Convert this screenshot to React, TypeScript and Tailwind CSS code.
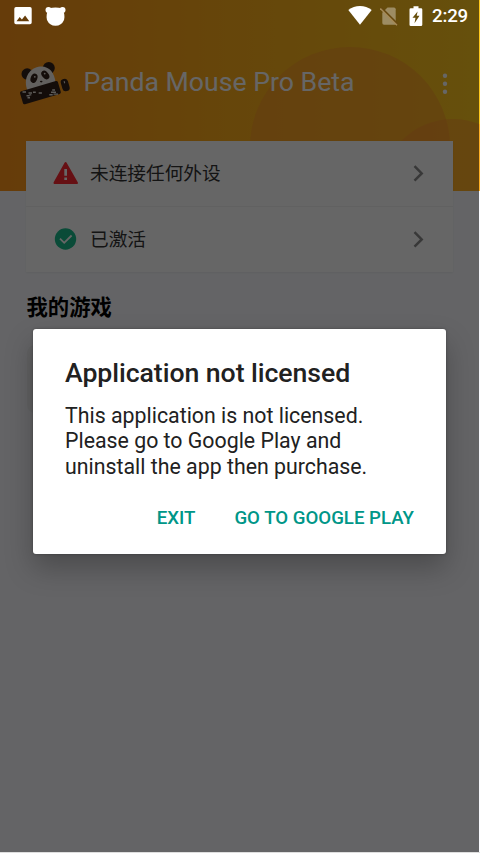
import React from 'react';

const App: React.FC = () => {
  return (
    <div className="relative w-[480px] h-[853px] overflow-hidden bg-[#fafbff] font-['Roboto','Noto_Sans_CJK_SC',sans-serif]">
      <HomeScreen />

      {/* Scrim behind the dialog */}
      <div className="absolute left-0 top-0 w-[479px] h-[852px] bg-black/60" />

      <div className="absolute inset-0 flex flex-col">
        <StatusBar />
        <div className="flex-1 pt-[297px] pl-[33px]">
          <LicenseDialog />
        </div>
      </div>
    </div>
  );
};

// ============================================================================
// HOME SCREEN
// ============================================================================

const HomeScreen: React.FC = () => {
  return (
    <div className="h-full border-b border-[#dedede] bg-[#fafbff]">
      <header className="relative h-[191px] overflow-hidden bg-linear-to-r from-[#ff9619] to-[#ffc81e]">
        <svg className="absolute inset-0" width="480" height="191" viewBox="0 0 480 191">
          <circle cx="350" cy="147" r="100" fill="#fa962c" fillOpacity="0.5" />
          <circle cx="453" cy="191" r="72" fill="#ff8c32" fillOpacity="0.4" />
        </svg>
        <div className="relative flex items-center pt-[56px] pl-[18px]">
          <PandaLogo />
          <h1 className="ml-[11.5px] -mt-px w-[270.5px] text-[26.67px] leading-[54px] text-white whitespace-nowrap">
            Panda Mouse Pro Beta
          </h1>
          <svg className="ml-[87px] mt-[3px]" width="8" height="24" viewBox="0 0 8 24" fill="#fff">
            <circle cx="4" cy="3.7" r="2.2" />
            <circle cx="4" cy="11.7" r="2.2" />
            <circle cx="4" cy="19.7" r="2.2" />
          </svg>
        </div>
      </header>

      <section className="relative -mt-[50px] ml-[26px] w-[427px] bg-white shadow-[0_1px_2px_rgba(0,0,0,0.06)]">
        <StatusRow label="未连接任何外设" icon={<WarningIcon />} />
        <div className="h-px bg-[#f2f2f2]" />
        <StatusRow label="已激活" icon={<CheckIcon />} />
      </section>

      <h2 className="mt-5 ml-[26.5px] text-[21.33px] leading-8 font-bold text-black">我的游戏</h2>
      <div className="mt-[21px] ml-[27px] h-[68px] w-[120px] rounded-lg bg-[#f2f3f6]" />
    </div>
  );
};

const StatusRow: React.FC<{ label: string; icon: React.ReactNode }> = ({ label, icon }) => {
  return (
    <div className="flex h-[65px] items-center pl-[27px] pr-[28px]">
      {icon}
      <span className="ml-[11px] flex-1 text-[18.67px] leading-7 text-[#333]">{label}</span>
      <svg width="12" height="18" viewBox="0 0 12 18" fill="none" stroke="#8c8c8c" strokeWidth="2.5">
        <path d="M1.5 1.2l7.2 7.2-7.2 7.2" />
      </svg>
    </div>
  );
};

const WarningIcon: React.FC = () => (
  <svg width="26" height="26" viewBox="0 0 26 26">
    <path d="M12.6 2.3L1.7 21.900h22z" fill="#ff2832" stroke="#ff2832" strokeWidth="2.4" strokeLinejoin="round" />
    <path d="M11.3 8h2.7v6.7h-2.7zM11.3 16.5h2.7v2.6h-2.7z" fill="#fff" />
  </svg>
);

const CheckIcon: React.FC = () => (
  <svg width="26" height="26" viewBox="0 0 26 26">
    <circle cx="12.5" cy="12" r="10.7" fill="#1abc8c" />
    <path d="M7 11.6l4.2 4.2 7.4-7.3" fill="none" stroke="#fff" strokeWidth="1.8" />
  </svg>
);

const PandaLogo: React.FC = () => (
  <svg width="54" height="48" viewBox="18 60 54 48">
    <g fill="#33221a">
      <circle cx="27.2" cy="75" r="5.7" />
      <circle cx="48.8" cy="69" r="6" />
    </g>
    <path d="M27.5 91.5C23 80.5 28 70 38.5 67.7C48 66 54.5 72.5 55.5 83.5z" fill="#f5f0ea" />
    <g fill="#33221a">
      <ellipse cx="34" cy="79.2" rx="3.3" ry="4.8" transform="rotate(20 34 79.2)" />
      <ellipse cx="45.3" cy="76" rx="3.3" ry="4.8" transform="rotate(-40 45.3 76)" />
      <ellipse cx="41.2" cy="82.6" rx="1.3" ry="0.8" />
      <rect x="20.7" y="87" width="39.5" height="13.4" rx="1.7" transform="rotate(-16.5 40.2 93.7)" />
      <rect x="61.5" y="79.7" width="7.4" height="12.6" rx="3.5" transform="rotate(-16.5 65.2 86)" />
    </g>
    <g fill="#e8e2da">
      <circle cx="34.8" cy="77.8" r="0.9" />
      <circle cx="44.7" cy="74.6" r="0.9" />
      <path d="M63.6 82.2l1-.3.6 2.2-1 .3z" />
      <path d="M22.500 92.200H26v1.500h-3.500zM28.500 93.300h3.500v1.500h-3.500zM26.500 96h3v1.500h-3zM33 92.600h2.800v1.500H33zM29.3 95.200h2v1.400h-2zM27.500 98h2.500v1.400h-2.500zM38.700 93.3h3.200v1.500h-3.200zM52.2 90.3h2.8v1.500h-2.8zM51 92.500h5v1.400h-5zM49.300 95h3.400v1.400h-3.400zM53.5 94.400h4.500v1.400h-4.500z" />
    </g>
  </svg>
);

// ============================================================================
// STATUS BAR
// ============================================================================

const StatusBar: React.FC = () => {
  return (
    <div className="flex h-8 items-center pl-[14px] pr-[12px] text-white">
      <svg width="18" height="18" viewBox="0 0 18 18">
        <path
          fillRule="evenodd"
          fill="currentColor"
          d="M2 0h14q1.7 0 1.7 1.7v13.800q0 1.700-1.700 1.700H2q-1.700 0-1.700-1.700V1.700Q.3 0 2 0zM2.500 14.200h12.800l-4.200-5.700-3.200 4.100-2.200-2.700z"
        />
      </svg>
      <svg className="ml-[13px] -mt-px" width="21" height="20" viewBox="0 0 21 20" fill="currentColor">
        <circle cx="3.5" cy="4" r="3" />
        <circle cx="17.5" cy="4" r="3" />
        <path d="M4 2.2Q10.5.6 17 2.2C19.4 6 20 10.500 19 14Q16.500 19.800 10.500 19.800T2 14C1 10.500 1.600 6 4 2.200z" />
      </svg>
      <div className="ml-auto flex items-center">
        <svg width="24" height="20" viewBox="0 0 24 20" fill="currentColor">
          <path d="M12 18.800L.3 4Q5.500.1 12 .1T23.700 4z" />
        </svg>
        <svg className="ml-[8px]" width="18" height="19" viewBox="0 0 18 19">
          <path d="M7.500.5H14q1.700 0 1.700 1.700v15.600H4q-1.700 0-1.700-1.700V5.700z" fill="#fff" fillOpacity="0.36" />
          <path d="M1 .5l17 17" stroke="#66480e" strokeWidth="2" />
          <path d="M.3 1.500l16.700 16.700" stroke="#a58a57" strokeWidth="1.5" />
        </svg>
        <svg className="ml-[10.5px] -mt-px" width="14" height="20" viewBox="0 0 14 20">
          <path
            fillRule="evenodd"
            fill="currentColor"
            d="M4.500.3h5v2H12q1.300 0 1.300 1.300v15.200q0 1.200-1.300 1.200H1.800Q.5 20 .5 18.800V3.600q0-1.300 1.300-1.300h2.700zM8.600 5.500L3.500 11.800h3l-1 5.500 5-7.500H7.700z"
          />
        </svg>
        <span className="ml-[9.5px] text-[18.67px] leading-8 font-medium tracking-[-0.2px]">2:29</span>
      </div>
    </div>
  );
};

// ============================================================================
// DIALOG
// ============================================================================

const LicenseDialog: React.FC = () => {
  return (
    <div
      role="dialog"
      className="h-[225px] w-[413px] rounded-[3px] bg-white pt-[28px] pl-8 pr-8 shadow-[0_14px_28px_rgba(0,0,0,0.25),0_0_3px_rgba(0,0,0,0.3)]"
    >
      <h2 className="text-[26.67px] leading-8 font-medium tracking-[-0.06px] text-[#212121]">
        Application not licensed
      </h2>
      <p className="mt-[14px] text-[21.33px] leading-[25.3px] text-[#212121] whitespace-nowrap">
        This application is not licensed.
        <br />
        Please go to Google Play and
        <br />
        uninstall the app then purchase.
      </p>
      <div className="mt-[23px] flex justify-end gap-[39px] text-[18.67px] leading-8 font-medium text-[#009688]">
        <button>EXIT</button>
        <button>GO TO GOOGLE PLAY</button>
      </div>
    </div>
  );
};

export default App;
